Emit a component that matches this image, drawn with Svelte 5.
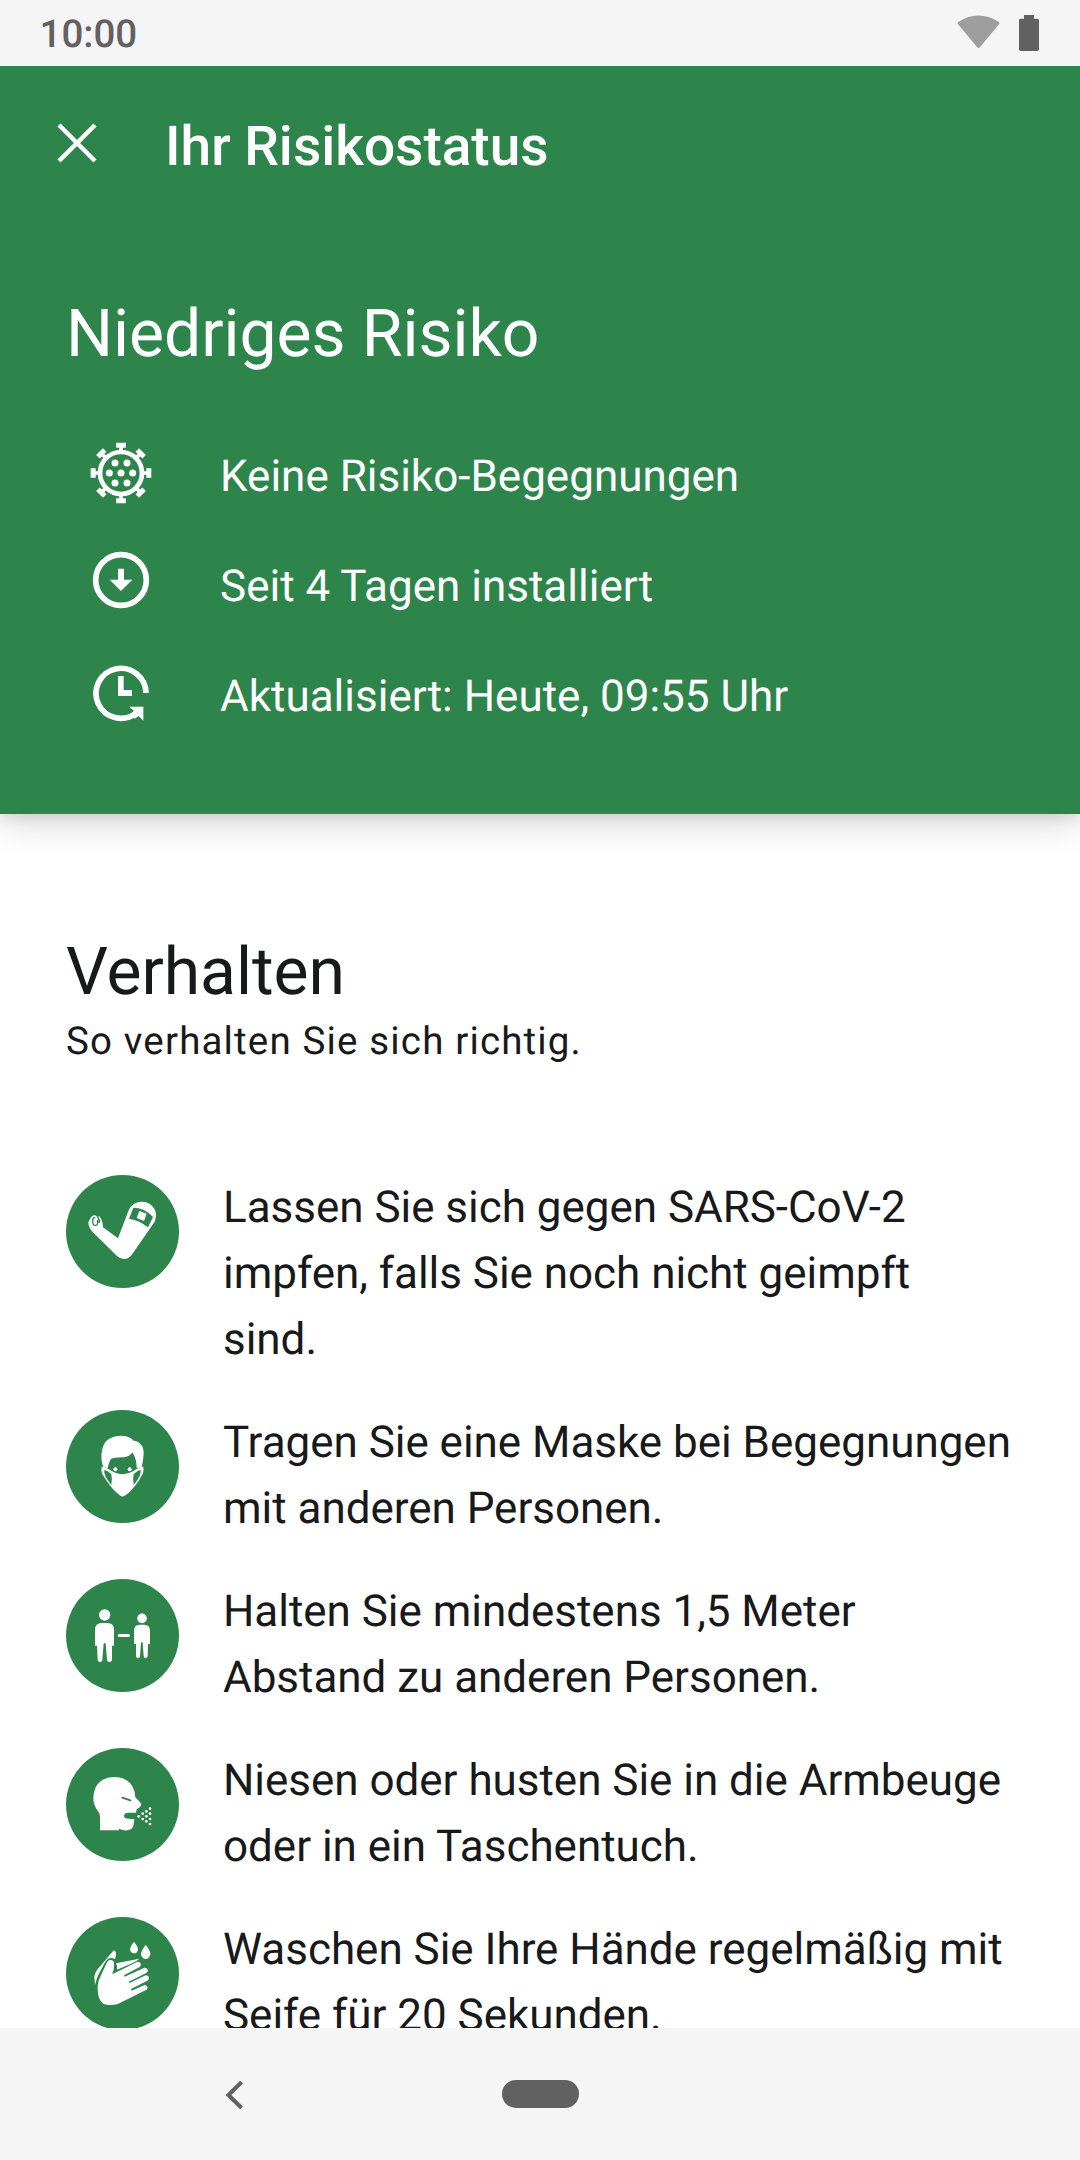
<script>
  const tips = [
    { icon: 'arm', box: '18 30 339 339', lines: ['Lassen Sie sich gegen SARS-CoV-2', 'impfen, falls Sie noch nicht geimpft', 'sind.'] },
    { icon: 'mask', box: '18 30 339 339', lines: ['Tragen Sie eine Maske bei Begegnungen', 'mit anderen Personen.'] },
    { icon: 'distance', box: '18 27 339 339', lines: ['Halten Sie mindestens 1,5 Meter', 'Abstand zu anderen Personen.'] },
    { icon: 'cough', box: '18 24 339 339', lines: ['Niesen oder husten Sie in die Armbeuge', 'oder in ein Taschentuch.'] },
    { icon: 'wash', box: '18 21 339 339', lines: ['Waschen Sie Ihre Hände regelmäßig mit', 'Seife für 20 Sekunden.'] }
  ];
  const spikes = [0, 45, 90, 135, 180, 225, 270, 315];
  const cells = [[105, 99], [141, 99], [88, 129], [123, 129], [158, 129], [105, 159], [141, 159]];
  const drops = [[236, 229], [248, 221], [248, 237], [259, 214], [259, 229], [259, 244], [270, 206], [270, 221], [270, 237], [270, 252]];
</script>

<div class="screen">
  <div class="status">
    <span class="time">10:00</span>
    <svg class="wifi" viewBox="172 45 128 102"><path d="M174 72Q172 68 176 65Q236 28 296 65Q300 68 298 72L240 142Q236 147 232 142Z" /></svg>
    <svg class="battery" viewBox="357 45 60 108"><path d="M372 45h30v11h10q5 0 5 5v87q0 5-5 5h-50q-5 0-5-5v-87q0-5 5-5h10z" /></svg>
  </div>

  <header>
    <div class="bar">
      <svg class="close" viewBox="0 0 40 40"><path d="M2 2L38 38M38 2L2 38" /></svg>
      <h1>Ihr Risikostatus</h1>
    </div>
    <h2>Niedriges Risiko</h2>
    <ul class="facts">
      <li>
        <svg viewBox="24 30 198 198">
          <circle class="ring" cx="123" cy="129" r="63" stroke-width="14" />
          {#each spikes as angle}
            <path transform="rotate({angle} 123 129)" d="M108.500 38h29v15h-9v10h-11v-10h-9z" />
          {/each}
          {#each cells as [x, y]}
            <circle cx={x} cy={y} r="10.500" />
          {/each}
        </svg>
        <span>Keine Risiko-Begegnungen</span>
      </li>
      <li>
        <svg class="install" viewBox="24 22 198 198">
          <circle class="ring" cx="123" cy="121" r="76" stroke-width="17" />
          <path d="M114 87h18v33h25L123 154L89 120h25z" />
        </svg>
        <span>Seit 4 Tagen installiert</span>
      </li>
      <li>
        <svg class="updated" viewBox="24 360 198 198">
          <path class="ring" d="M198 459A75 75 0 1 0 168 520" stroke-width="17" />
          <path d="M148 500h42v42l-14-14l-12 8l-11-15l9-8z" />
          <path d="M114 408h17v42h25v18h-42z" />
        </svg>
        <span>Aktualisiert: Heute, 09:55 Uhr</span>
      </li>
    </ul>
  </header>

  <main>
    <h2>Verhalten</h2>
    <p class="sub">So verhalten Sie sich richtig.</p>
    <ul class="tips">
      {#each tips as tip}
        <li>
          <svg viewBox={tip.box}>
            {#if tip.icon === 'arm'}
              <path d="M85 172L92 158Q98 150 106 151L113 157L118 153L125 165L128 176L129 187L174 220L206 136Q217 110 246 110Q272 111 284 133Q292 150 284 170L217 267Q207 282 192 282Q179 281 171 273L98 201Q85 188 85 172Z" />
              <path class="green" d="M220 128Q254 128 279 156L264 187Q239 166 207 161Z" />
              <path d="M238 138L260 146L252 168L230 159Z" />
              <path class="line" stroke-width="4" d="M106 157Q99 157 98 165Q97 175 101 180Q108 183 112 178Q115 173 112 165M113 156Q119 164 118 174" />
            {:else if tip.icon === 'mask'}
              <path d="M130 201Q121 178 126 151Q133 109 181 107Q209 107 221 122Q239 123 248 141Q255 159 245 201L230 204Q230 177 217 157Q210 169 194 172Q163 171 153 177Q147 185 143 205Z" />
              <circle cx="166" cy="208" r="6" />
              <circle cx="209" cy="208" r="6" />
              <path d="M125 200Q136 200 145 207Q166 222 187 223Q209 222 230 207Q240 199 250 200Q252 218 244 229Q229 258 203 281L192 288Q187 291 181 287Q155 269 131 229Q122 218 125 200Z" />
              <path class="green" d="M133 209Q145 212 154 223Q157 235 154 255Q142 241 136 228Q132 220 133 209ZM242 209Q230 212 221 223Q218 235 221 255Q233 241 239 228Q243 220 242 209Z" />
            {:else if tip.icon === 'distance'}
              <circle cx="134" cy="135" r="17" />
              <path d="M126 159h16q20 0 20 20v48h-6v41q0 8-8 8q-7 0-7-8l-4-47q-3-4-6 0l-4 47q0 8-7 8q-7 0-7-8l-2-41h-6v-48q0-20 21-20z" />
              <circle cx="246" cy="145" r="14.500" />
              <path d="M239 164h14q17 0 17 18v40h-6l-1 36q-1 7-6 7q-5 0-6-7l-3-40q-2-4-5 0l-3 40q-1 7-6 7q-5 0-6-7v-36h-6v-40q0-18 17-18z" />
              <rect x="173" y="192" width="37" height="9" rx="4.500" />
            {:else if tip.icon === 'cough'}
              <path d="M120 271V229Q119 218 110 208Q100 190 100 176Q102 113 162 111Q214 112 224 157L226 172L242 188Q246 194 240 201L230 208L228 218H206Q192 218 192 228Q193 236 206 236L223 238L220 258Q214 275 187 270L177 266V271Z" />
              <path class="line" stroke-width="6" stroke-linecap="round" d="M187 173L211 181" />
              {#each drops as [x, y]}
                <circle cx={x} cy={y} r="4" />
              {/each}
            {:else}
              <path d="M105 225L103 201Q104 191 111 180L160 122Q166 119 168 129Q169 138 165 147Q155 141 145 146Q138 150 134 159L119 187Q109 205 105 225Z" />
              <path d="M172 159L238 146Q229 154 220 158L171 179Q174 169 168 160Z" />
              <path d="M113 228Q113 214 121 200L141 157Q147 147 156 151Q164 155 162 163Q163 178 157 193L231 156Q239 154 243 162Q243 168 239 171L192 196L194 200L253 173Q261 173 264 180Q264 186 259 189L206 215L208 219L257 196Q266 196 267 204Q266 210 262 212L213 237L215 242L254 225Q262 226 263 233Q262 238 258 240L178 280Q169 285 154 285Q134 285 127 279Q112 266 113 228Z" />
              <path d="M222 95Q235 111 234 119Q232 130 222 130Q211 129 210 118Q210 110 222 95ZM257 104Q272 123 271 133Q268 147 257 147Q244 146 243 133Q243 123 257 104Z" />
            {/if}
          </svg>
          <p>{#each tip.lines as line}<span>{line}</span>{/each}</p>
        </li>
      {/each}
    </ul>
  </main>

  <nav>
    <svg class="back" viewBox="80 212 50 82"><path d="M126 215L87 253L126 291" /></svg>
    <div class="home"></div>
  </nav>
</div>

<style>
  :global(body) { margin: 0; background: #fff; }
  .screen {
    width: 1080px;
    height: 2160px;
    display: flex;
    flex-direction: column;
    overflow: hidden;
    font-family: Roboto, sans-serif;
    text-rendering: geometricPrecision;
    color: #17191a;
    background: #fff;
  }
  h1, h2, p, ul { margin: 0; padding: 0; font-weight: 400; }
  ul { list-style: none; display: flex; flex-direction: column; }
  li { display: flex; }
  svg { display: block; flex: none; }
  .status {
    box-sizing: border-box;
    position: relative;
    z-index: 1;
    flex: none;
    height: 66px;
    padding: 0 41px 0 39.5px;
    display: flex;
    align-items: flex-start;
    background: #f5f5f5;
  }
  .time { flex: 1; font-size: 38.5px; font-weight: 500; line-height: 70px; color: #616161; }
  .wifi { width: 43px; height: 34px; margin: 15px 19px 0 0; fill: #9e9e9e; }
  .battery { width: 20px; height: 36px; margin-top: 15px; fill: #616161; }
  header {
    box-sizing: border-box;
    position: relative;
    flex: none;
    height: 748px;
    background: #2e854b;
    color: #fff;
    box-shadow: 0 11px 33px rgba(0, 0, 0, .14), 0 3px 14px rgba(0, 0, 0, .1);
  }
  .bar { height: 160px; display: flex; align-items: center; padding-left: 57px; gap: 68px; }
  .close { width: 40px; height: 40px; margin-top: -6px; fill: none; stroke: #fff; stroke-width: 4.500; }
  h1 { font-size: 55px; font-weight: 500; line-height: 64px; padding-top: 2px; }
  h2 { font-size: 66px; line-height: 78px; padding-left: 66px; letter-spacing: -.05px; }
  header h2 { margin-top: 70px; }
  .facts { padding: 47px 0 0 88px; }
  .facts li { height: 110px; align-items: center; gap: 66px; font-size: 44px; }
  .facts svg { width: 66px; height: 66px; fill: #fff; margin-top: -6px; }
  .facts svg.install { margin-top: -12px; }
  .facts svg.updated { margin-top: -6px; }
  .facts .ring { fill: none; stroke: #fff; }
  main { flex: 1; min-height: 0; overflow: hidden; padding-top: 120px; }
  .sub { padding-left: 66px; font-size: 38.5px; line-height: 60px; letter-spacing: 1.15px; }
  .tips { padding: 103px 0 0 66px; gap: 37px; }
  .tips li { gap: 44px; align-items: flex-start; }
  .tips svg { width: 113px; height: 113px; border-radius: 50%; background: #2e854b; fill: #fff; }
  .green { fill: #2e854b; }
  .line { fill: none; stroke: #2e854b; }
  .tips p { font-size: 44px; line-height: 66px; margin: -1px 0 1px; letter-spacing: -.03px; }
  .tips span { display: block; white-space: nowrap; }
  nav { flex: none; height: 132px; position: relative; display: flex; align-items: center; padding-left: 226px; gap: 259px; background: #f5f5f5; }
  .back { width: 17px; height: 28px; margin-top: 1px; fill: none; stroke: #616161; stroke-width: 12; }
  .home { width: 77px; height: 28px; border-radius: 14px; background: #616161; }
</style>
